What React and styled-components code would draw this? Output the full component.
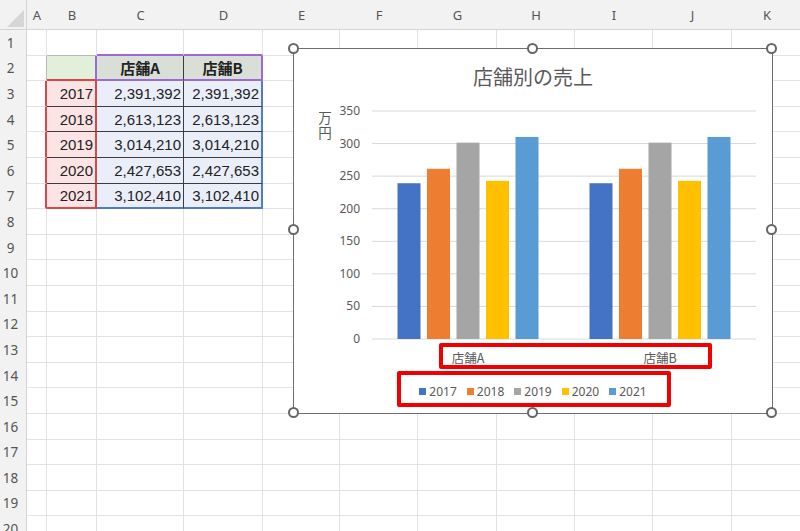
import React from 'react'
import styled, { createGlobalStyle } from 'styled-components'

const GlobalStyle = createGlobalStyle`
  html, body {
    margin: 0;
    padding: 0;
    background: #fff;
    overflow: hidden;
  }
`

const COLS = ['A', 'B', 'C', 'D', 'E', 'F', 'G', 'H', 'I', 'J', 'K']
const ROWS = 20

const GRID = '#e2e2e2'
const PURPLE = '2px solid #9c6ad2'
const RED = '2px solid #d9474b'
const BLUE = '2px solid #4f7bc8'
const DARK = '1px solid #3c3c3c'
const SOFT = '1px solid #b9b9b9'
const LIGHT = `1px solid ${GRID}`

const years = ['2017', '2018', '2019', '2020', '2021']
const sales = ['2,391,392', '2,613,123', '3,014,210', '2,427,653', '3,102,410']
const values = [239.1, 261.3, 301.4, 242.8, 310.2]
const stores = ['店舗A', '店舗B']
const seriesColors = ['#4472c4', '#ed7d31', '#a5a5a5', '#ffc000', '#5b9bd5']

// borders of the highlighted table B2:D7 (c: 1 = A, 2 = B ...)
const rightBorder = (r, c) => {
  if (r === 2) return [SOFT, PURPLE, DARK, PURPLE][c - 1] || LIGHT
  if (r >= 3 && r <= 7) return [RED, RED, DARK, BLUE][c - 1] || LIGHT
  return LIGHT
}
const bottomBorder = (r, c) => {
  if (c < 2 || c > 4) return LIGHT
  if (r === 1) return c === 2 ? SOFT : PURPLE
  if (r === 2) return c === 2 ? RED : PURPLE
  if (r >= 3 && r <= 6) return DARK
  if (r === 7) return c === 2 ? RED : BLUE
  return LIGHT
}

const cellContent = (r, c) => {
  if (r === 2 && c === 2) return { fill: '#e2efda' }
  if (r === 2 && (c === 3 || c === 4)) return { fill: '#d9dfd7', text: stores[c - 3], head: true }
  if (r >= 3 && r <= 7) {
    if (c === 2) return { fill: '#fce4e4', text: years[r - 3] }
    if (c === 3 || c === 4) return { fill: '#e9eef9', text: sales[r - 3] }
  }
  return {}
}

export default function App() {
  return (
    <>
      <GlobalStyle />
      <Page>
        <Sheet>
          <Corner />
          {COLS.map((l) => (
            <ColHead key={l}>{l}</ColHead>
          ))}
          {Array.from({ length: ROWS }, (_, i) => {
            const r = i + 1
            return (
              <React.Fragment key={r}>
                <RowHead>{r}</RowHead>
                {COLS.map((_, j) => {
                  const c = j + 1
                  const info = cellContent(r, c)
                  return (
                    <Cell
                      key={c}
                      $right={rightBorder(r, c)}
                      $bottom={bottomBorder(r, c)}
                      $fill={info.fill}
                      $head={info.head}
                    >
                      {info.text}
                    </Cell>
                  )
                })}
              </React.Fragment>
            )
          })}
        </Sheet>

        <Chart>
          <Title>店舗別の売上</Title>
          <Plot />
          <Legend>
            {years.map((y, i) => (
              <LegendItem key={y}>
                <Swatch $color={seriesColors[i]} />
                {y}
              </LegendItem>
            ))}
          </Legend>

          <Highlight $left={145} $top={294} $width={273} $height={26} />
          <Highlight $left={103} $top={322} $width={274} $height={36} />

          {[-6, 233, 472].map((x) =>
            [-6, 175, 358].map((y) =>
              x === 233 && y === 175 ? null : <Handle key={`${x}-${y}`} $x={x} $y={y} />
            )
          )}
        </Chart>
      </Page>
    </>
  )
}

const Plot = () => {
  const zero = 235
  const scale = 228 / 350
  const x0 = 78
  const catWidth = 192
  const ticks = [0, 50, 100, 150, 200, 250, 300, 350]
  return (
    <PlotSvg width="478" height="270" viewBox="0 0 478 270">
      {ticks.map((t) => {
        const y = zero - t * scale
        return (
          <g key={t}>
            <line x1={x0} x2={462} y1={y} y2={y} stroke="#d9d9d9" strokeWidth="1" />
            <text
              x="66"
              y={y + 4}
              textAnchor="end"
              fontSize="12"
              fill="#595959"
              fontFamily="'Noto Sans', sans-serif"
            >
              {t}
            </text>
          </g>
        )
      })}
      <text
        x="31"
        y="7"
        writingMode="vertical-rl"
        letterSpacing="2"
        fontSize="13.5"
        fill="#595959"
        fontFamily="'Noto Sans CJK JP', sans-serif"
      >
        万円
      </text>
      {stores.map((s, ci) => {
        const center = x0 + catWidth * (ci + 0.5)
        return (
          <g key={s}>
            {values.map((v, si) => {
              const h = v * scale
              return (
                <rect
                  key={si}
                  x={center - 70.5 + si * 29.5}
                  y={zero - h}
                  width="23"
                  height={h}
                  fill={seriesColors[si]}
                />
              )
            })}
            <text
              x={center}
              y="258.5"
              textAnchor="middle"
              fontSize="12.5"
              fill="#595959"
              fontFamily="'Noto Sans CJK JP', sans-serif"
            >
              {s}
            </text>
          </g>
        )
      })}
    </PlotSvg>
  )
}

const Page = styled.div`
  position: relative;
  width: 800px;
  height: 531px;
  overflow: hidden;
  font-family: 'Liberation Sans', 'Noto Sans CJK JP', sans-serif;
`

const Sheet = styled.div`
  display: grid;
  grid-template-columns: 27px 20px 50px 87px 79px 77px 78px 79px 78px 78px 79px 70px;
  grid-template-rows: 30px repeat(${ROWS}, 25.6px);
`

const Corner = styled.div`
  position: relative;
  background: #f2f2f2;
  border-bottom: 1px solid #d4d4d4;
  border-right: 1px solid #d4d4d4;
  box-sizing: border-box;

  &::after {
    content: '';
    position: absolute;
    right: 2px;
    bottom: 2px;
    width: 17px;
    height: 17px;
    background: #d6d6d6;
    clip-path: polygon(100% 0, 100% 100%, 0 100%);
  }
`

const ColHead = styled.div`
  background: #f2f2f2;
  border-bottom: 1px solid #d4d4d4;
  box-sizing: border-box;
  display: flex;
  align-items: center;
  justify-content: center;
  font-family: 'Noto Sans', sans-serif;
  font-size: 13px;
  color: #555;
`

const RowHead = styled.div`
  background: #f2f2f2;
  border-right: 1px solid #d4d4d4;
  box-sizing: border-box;
  display: flex;
  align-items: center;
  justify-content: center;
  padding-right: 5px;
  font-family: 'Noto Sans', sans-serif;
  font-size: 13.5px;
  color: #555;
`

const Cell = styled.div`
  box-sizing: border-box;
  border-right: ${(p) => p.$right};
  border-bottom: ${(p) => p.$bottom};
  background: ${(p) => p.$fill || '#fff'};
  display: flex;
  align-items: center;
  justify-content: ${(p) => (p.$head ? 'center' : 'flex-end')};
  padding-right: ${(p) => (p.$head ? '0' : '2px')};
  font-family: ${(p) =>
    p.$head ? "'Noto Sans CJK JP', sans-serif" : "'Liberation Sans', sans-serif"};
  font-size: 15px;
  font-weight: ${(p) => (p.$head ? 700 : 400)};
  color: #222;
  white-space: nowrap;
`

const Chart = styled.div`
  position: absolute;
  left: 293px;
  top: 48px;
  width: 480px;
  height: 366px;
  box-sizing: border-box;
  border: 1px solid #6e6e6e;
  background: #fff;
  display: flex;
  flex-direction: column;
  align-items: center;
`

const Title = styled.div`
  height: 55px;
  display: flex;
  align-items: center;
  font-family: 'Noto Sans CJK JP', sans-serif;
  font-size: 20px;
  color: #595959;
`

const PlotSvg = styled.svg`
  display: block;
  flex: none;
  overflow: visible;
`

const Legend = styled.div`
  height: 34px;
  display: flex;
  align-items: center;
  justify-content: center;
  gap: 10px;
  font-family: 'Noto Sans', sans-serif;
  font-size: 12px;
  color: #595959;
`

const LegendItem = styled.div`
  display: flex;
  align-items: center;
  gap: 3px;
`

const Swatch = styled.span`
  width: 7px;
  height: 7px;
  background: ${(p) => p.$color};
`

const Highlight = styled.div`
  position: absolute;
  left: ${(p) => p.$left}px;
  top: ${(p) => p.$top}px;
  width: ${(p) => p.$width}px;
  height: ${(p) => p.$height}px;
  box-sizing: border-box;
  border: 4px solid #f00000;
  border-radius: 2px;
`

const Handle = styled.div`
  position: absolute;
  left: ${(p) => p.$x}px;
  top: ${(p) => p.$y}px;
  width: 11px;
  height: 11px;
  box-sizing: border-box;
  border: 2px solid #666;
  border-radius: 50%;
  background: #fff;
`
